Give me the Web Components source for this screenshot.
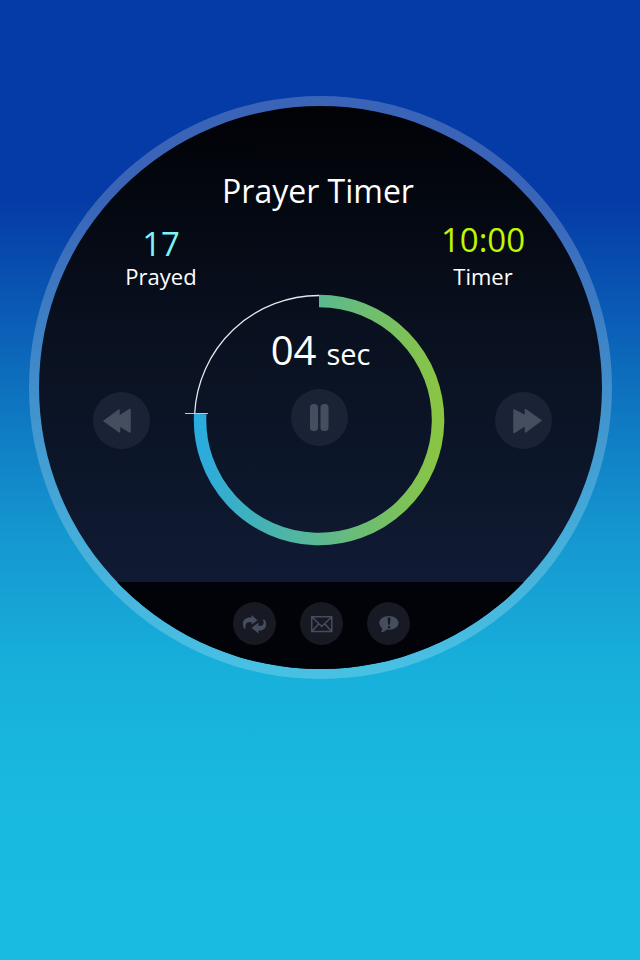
<!DOCTYPE html>
<html lang="en">
<head>
<meta charset="utf-8">
<meta name="viewport" content="width=device-width, initial-scale=1">
<title>Prayer Timer</title>
<style>
  html { min-height: 100%; }
  body {
    margin: 0;
    min-height: 100vh;
    font-family: "Open Sans", "Noto Sans", sans-serif;
    font-weight: 400;
    color: #fff;
    background: linear-gradient(to bottom, #053ba6 0%, #053ba6 21%, #0e75c0 42%, #1598d0 56%, #17b0db 70%, #19badf 84%, #19bbe1 100%);
  }
</style>
</head>
<body>
<timer-app></timer-app>

<script>
const define = (name, html, setup) => {
  const template = document.createElement('template');
  template.innerHTML = html;
  customElements.define(name, class extends HTMLElement {
    constructor() {
      super();
      this.attachShadow({ mode: 'open' }).append(template.content.cloneNode(true));
    }
    connectedCallback() { if (setup) setup(this, this.shadowRoot); }
  });
};

define('round-button', `
  <style>
    :host { display: block; }
    button {
      display: grid; place-items: center;
      width: var(--size, 57px); height: var(--size, 57px);
      margin: 0; padding: 0; border: 0; border-radius: 50%;
      background: var(--face, #1a2235); color: #464d5f; cursor: pointer;
    }
    ::slotted(svg) { display: block; }
  </style>
  <button type="button"><slot></slot></button>`,
  (el, root) => root.querySelector('button').setAttribute('aria-label', el.getAttribute('label')));

define('timer-stat', `
  <style>
    :host { display: flex; flex-direction: column; align-items: center; width: 92px; }
    .value { font-size: 33px; line-height: 36px; color: var(--accent); }
    .label { font-size: 22px; line-height: 28px; }
  </style>
  <div class="value"><slot name="value"></slot></div>
  <div class="label"><slot></slot></div>`);

define('timer-dial', `
  <style>
    :host { display: grid; width: 252px; height: 252px; }
    svg, .content { grid-area: 1 / 1; }
    svg { width: 252px; height: 252px; overflow: visible; }
    .content { display: flex; flex-direction: column; align-items: center; gap: 9px; padding: 30px 0 0 4px; }
    ::slotted(round-button) { margin-right: 3px; }
  </style>
  <svg viewBox="0 0 252 252" fill="none" aria-hidden="true">
    <defs>
      <linearGradient id="ring" gradientUnits="userSpaceOnUse" x1="1" y1="0" x2="251" y2="0">
        <stop offset="0" stop-color="#29abe2"/><stop offset="1" stop-color="#8cc63f"/>
      </linearGradient>
    </defs>
    <path d="M126 7A119 119 0 1 1 7.200 120" stroke="url(#ring)" stroke-width="12.500"/>
    <path d="M126 1.500A124.500 124.500 0 0 0 1.700 119" stroke="#e6e7ea" stroke-width="1.300"/>
    <path d="M-8 119.500H15" stroke="#c3c7cd" stroke-width="1.200"/>
  </svg>
  <div class="content"><slot></slot></div>`);

define('timer-readout', `
  <style>
    :host { display: flex; align-items: baseline; gap: 10px; line-height: 52px; white-space: nowrap; }
    .number { font-size: 40px; }
    .unit { font-size: 29px; }
  </style>
  <span class="number"><slot name="number"></slot></span><span class="unit"><slot></slot></span>`);

define('timer-toolbar', `
  <style>
    :host {
      --size: 43px; --face: #171a23;
      display: flex; justify-content: center; gap: 24px;
      padding: 20px 0 24px 1px; background: #020308;
    }
  </style>
  <slot></slot>`);

define('timer-app', `
  <style>
    :host { display: block; padding: 96px 28px 96px 29px; }
    .disc {
      box-sizing: border-box; width: 100%; max-width: 583px; margin: 0 auto;
      display: flex; flex-direction: column; overflow: hidden;
      border: 10px solid rgba(255,255,255,.21); border-radius: 50%;
      background: linear-gradient(to bottom, #010206 0%, #040811 18%, #0a1222 45%, #0d172b 68%, #101a34 85%) padding-box;
    }
    h1 { margin: 0; padding: 62px 5px 0 0; text-align: center; font-size: 32px; line-height: 46px; font-weight: inherit; }
    .stats { display: flex; justify-content: space-between; align-items: flex-end; padding: 8px 73px 0 76px; }
    .prayed { --accent: #7df3fb; }
    .timer { --accent: #c0f800; gap: 4px; }
    .controls { display: flex; justify-content: space-between; align-items: center; padding: 4px 50px 36px 54px; }
    timer-dial { margin-right: 8px; }
  </style>
  <main class="disc">
    <h1>Prayer Timer</h1>
    <div class="stats">
      <timer-stat class="prayed"><span slot="value">17</span>Prayed</timer-stat>
      <timer-stat class="timer"><span slot="value">10:00</span>Timer</timer-stat>
    </div>
    <div class="controls">
      <round-button label="Rewind">
        <svg width="57" height="57" viewBox="0 0 57 57" fill="currentColor"><path stroke="currentColor" stroke-width="1.500" stroke-linejoin="round" d="M11 29L26 18V24.500L37 17.500V40L26.500 33.500V40Z"/></svg>
      </round-button>
      <timer-dial>
        <timer-readout><span slot="number">04</span>sec</timer-readout>
        <round-button label="Pause">
          <svg width="57" height="57" viewBox="0 0 57 57" fill="currentColor"><rect x="19" y="15" width="8" height="27" rx="3.500"/><rect x="29.500" y="15" width="8" height="27" rx="3.500"/></svg>
        </round-button>
      </timer-dial>
      <round-button label="Fast forward">
        <svg width="57" height="57" viewBox="0 0 57 57" fill="currentColor"><path stroke="currentColor" stroke-width="1.500" stroke-linejoin="round" d="M46 28.500L30.500 17.500V24L19 18V40.500L30.500 33V40Z"/></svg>
      </round-button>
    </div>
    <timer-toolbar>
      <round-button label="Repeat">
        <svg width="43" height="43" viewBox="0 0 43 43" fill="currentColor"><path d="M11 26.500C8 20 11 15 18.500 15.500V13L24.500 18.200L18.500 22.800V20C14 19.500 11.500 21.500 12.800 26.300ZM31.500 17.500C35 23 32.500 28.800 25.500 28.500V31.500L18.500 25.800L25.500 20.500V23.800C30 24.500 32 22 29.800 17.500Z"/></svg>
      </round-button>
      <round-button label="Mail">
        <svg width="43" height="43" viewBox="0 0 43 43" fill="none" stroke="currentColor" stroke-width="1.500"><path d="M11.700 14.700H31.800V29.500H11.700ZM12 15L21.700 24.500L31.500 15M12 29.300L18.800 21.800M31.500 29.300L24.700 21.800"/></svg>
      </round-button>
      <round-button label="Feedback">
        <svg width="43" height="43" viewBox="0 0 43 43" fill="currentColor"><path fill-rule="evenodd" d="M22 14C27.500 14 31.500 17 31.500 20.800S27.500 27.800 22 27.800L19.800 27.600C18.500 29.200 16.500 30.200 13.500 30.300C14.800 29.200 15.200 28 15.200 26.200C13.500 24.900 12.300 23 12.300 20.800C12.300 17 16.500 14 22 14ZM20.500 15.500L21.100 22.800H22.900L23.500 15.500ZM20.900 24V26.200H23.100V24Z"/></svg>
      </round-button>
    </timer-toolbar>
  </main>`);
</script>
</body>
</html>
